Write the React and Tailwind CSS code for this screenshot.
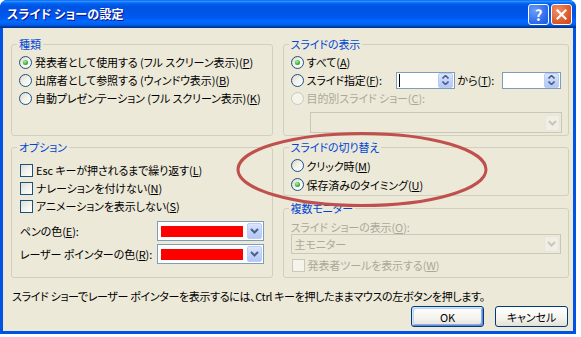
import React from 'react'
import { clsx } from 'clsx'
import { twMerge } from 'tailwind-merge'

function cn(...inputs) {
  return twMerge(clsx(inputs))
}

const U = ({ children }) => <span className="underline underline-offset-[1px]">{children}</span>

const Group = ({ title, className, children }) => (
  <div className={cn('relative rounded-[3px] border border-[#d0d0bf]', className)}>
    <span className="absolute left-[5px] top-[-8px] bg-[#ece9d8] px-[2px] leading-[14px] text-[#0046d5]">{title}</span>
    {children}
  </div>
)

const Radio = ({ checked, disabled, children, className }) => (
  <div className={cn('flex h-[18px] items-center', className)}>
    <div
      className={cn(
        'flex h-[13px] w-[13px] shrink-0 items-center justify-center rounded-full border',
        disabled
          ? 'border-[#cac8bb] bg-[#f5f4ea]'
          : 'border-[#1c5180] bg-[linear-gradient(135deg,#dcd9c8_0%,#f3f2ec_50%,#ffffff_100%)]'
      )}
    >
      {checked && (
        <div className="h-[5px] w-[5px] rounded-full bg-[radial-gradient(circle_at_40%_35%,#b6f29e_0%,#39b33b_55%,#1d8a1d_100%)]" />
      )}
    </div>
    <span className={cn('ml-[3px] whitespace-nowrap', disabled && 'text-[#aca899]')}>{children}</span>
  </div>
)

const Check = ({ disabled, children, className }) => (
  <div className={cn('flex h-[18px] items-center', className)}>
    <div
      className={cn(
        'h-[13px] w-[13px] shrink-0 border',
        disabled
          ? 'border-[#cac8bb] bg-[#f5f4ea]'
          : 'border-[#1c5180] bg-[linear-gradient(135deg,#dcdcd7_0%,#f0f0ea_45%,#ffffff_100%)]'
      )}
    />
    <span className={cn('ml-[3px] whitespace-nowrap', disabled && 'text-[#aca899]')}>{children}</span>
  </div>
)

const Chevron = ({ disabled }) => (
  <svg width="9" height="6" viewBox="0 0 9 6">
    <path d="M1 1 L4.5 4.5 L8 1" fill="none" stroke={disabled ? '#c9c7ba' : '#4d6185'} strokeWidth="2" />
  </svg>
)

const DropButton = ({ disabled }) => (
  <div
    className={cn(
      'flex h-[16px] w-[15px] items-center justify-center rounded-[2px] border',
      disabled
        ? 'border-[#e8e6da] bg-[#f1efe5]'
        : 'border-[#b9cdf7] bg-[linear-gradient(to_bottom,#dbe6fe_0%,#c3d4fb_50%,#b3c8f5_100%)]'
    )}
  >
    <Chevron disabled={disabled} />
  </div>
)

const Spinner = ({ caret, className }) => (
  <div className={cn('flex h-[17px] w-[59px] items-center justify-between border border-[#7f9db9] bg-white pr-[1px]', className)}>
    <div>{caret && <div className="ml-[2px] h-[13px] w-[1px] bg-black" />}</div>
    <div className="flex h-[15px] w-[15px] flex-col items-center justify-center gap-[2px] rounded-[2px] border border-[#b9cdf7] bg-[linear-gradient(to_bottom,#dbe6fe_0%,#c3d4fb_50%,#b3c8f5_100%)]">
      <svg width="7" height="4" viewBox="0 0 7 4">
        <path d="M0.5 3.5 L3.5 0.5 L6.5 3.5" fill="none" stroke="#4d6185" strokeWidth="1.6" />
      </svg>
      <svg width="7" height="4" viewBox="0 0 7 4">
        <path d="M0.5 0.5 L3.5 3.5 L6.5 0.5" fill="none" stroke="#4d6185" strokeWidth="1.6" />
      </svg>
    </div>
  </div>
)

const ColorCombo = ({ className }) => (
  <div className={cn('flex h-[20px] w-[107px] shrink-0 items-center justify-between border border-[#7f9db9] bg-white pl-[3px] pr-[1px]', className)}>
    <div className="h-[11px] w-[82px] bg-[#ff0000]" />
    <DropButton />
  </div>
)

const TitleButton = ({ children, className }) => (
  <div className={cn('flex h-[21px] w-[21px] items-center justify-center rounded-[3px] border border-white text-[15px] font-bold leading-none text-white', className)}>
    {children}
  </div>
)

export default function App() {
  return (
    <div className="relative h-[337px] w-[581px] bg-white font-['Noto_Sans_CJK_JP',sans-serif] text-[11px] leading-[14px] tracking-[-0.1px] text-black [font-feature-settings:'palt']">
      <div className="flex h-[334px] w-[576px] flex-col overflow-hidden rounded-t-[7px] bg-[#0054e3]">
        {/* Title bar */}
        <div className="flex h-[28px] shrink-0 items-center justify-between bg-[linear-gradient(to_bottom,#0058ee_0%,#3593ff_4%,#288eff_6%,#127dff_8%,#036ffc_10%,#0262ee_14%,#0057e5_20%,#0054e3_24%,#0055eb_56%,#005bf5_66%,#026afe_76%,#0062ef_86%,#0052d6_92%,#0040ab_94%,#003092_100%)] pl-[7px] pr-[4px]">
          <span className="text-[12px] font-bold tracking-[0.2px] text-white [text-shadow:1px_1px_#0f1089]">スライド ショーの設定</span>
          <div className="flex gap-[2px] pt-[1px]">
            <TitleButton className="bg-[radial-gradient(circle_at_30%_30%,#6d9cf8_0%,#2f6ef0_60%,#1d55d8_100%)]">?</TitleButton>
            <TitleButton className="bg-[radial-gradient(circle_at_30%_30%,#f0906a_0%,#e05a2c_60%,#c94418_100%)]">
              <svg width="11" height="11" viewBox="0 0 11 11">
                <path d="M1.5 1.5 L9.5 9.5 M9.5 1.5 L1.5 9.5" stroke="white" strokeWidth="2.2" strokeLinecap="square" />
              </svg>
            </TitleButton>
          </div>
        </div>

        {/* Client area */}
        <div className="mx-[3px] mb-[3px] flex flex-1 flex-col bg-[#ece9d8] pl-[8px] pr-[4px] pt-[16px]">
          <div className="flex gap-[10px]">
            {/* Left column */}
            <div className="flex w-[262px] flex-col">
              <Group title="種類" className="h-[92px] pl-[7px] pt-[8px]">
                <Radio checked>発表者として使用する (フル スクリーン表示)(<U>P</U>)</Radio>
                <Radio>出席者として参照する (ウィンドウ表示)(<U>B</U>)</Radio>
                <Radio>自動プレゼンテーション (フル スクリーン表示)(<U>K</U>)</Radio>
              </Group>
              <Group title="オプション" className="mt-[11px] h-[131px] pl-[8px] pt-[13px]">
                <Check>Esc キーが押されるまで繰り返す(<U>L</U>)</Check>
                <Check>ナレーションを付けない(<U>N</U>)</Check>
                <Check>アニメーションを表示しない(<U>S</U>)</Check>
                <div className="mt-[6px] flex items-center justify-between pr-[8px]">
                  <span className="whitespace-nowrap">ペンの色(<U>E</U>):</span>
                  <ColorCombo />
                </div>
                <div className="mt-[3px] flex items-center justify-between pr-[8px]">
                  <span className="whitespace-nowrap">レーザー ポインターの色(<U>R</U>):</span>
                  <ColorCombo />
                </div>
              </Group>
            </div>

            {/* Right column */}
            <div className="flex w-[287px] flex-col">
              <Group title="スライドの表示" className="h-[92px] pl-[7px] pt-[8px]">
                <Radio checked>すべて(<U>A</U>)</Radio>
                <div className="flex h-[18px] items-center">
                  <Radio className="w-[105px]">スライド指定(<U>F</U>):</Radio>
                  <Spinner caret />
                  <span className="w-[47px] whitespace-nowrap pl-[3px]">から(<U>T</U>):</span>
                  <Spinner />
                </div>
                <Radio disabled>目的別スライド ショー(<U>C</U>):</Radio>
                <div className="ml-[19px] mt-[5px] flex h-[21px] w-[252px] items-center justify-end border border-[#c9c7ba] bg-[#ece9d8] pr-[1px]">
                  <DropButton disabled />
                </div>
              </Group>
              <Group title="スライドの切り替え" className="mt-[11px] h-[49px] pl-[7px] pt-[8px]">
                <Radio className="h-[19px]">クリック時(<U>M</U>)</Radio>
                <Radio checked className="h-[19px]">保存済みのタイミング(<U>U</U>)</Radio>
              </Group>
              <Group title="複数モニター" className="mt-[12px] h-[70px] pl-[7px] pt-[11px]">
                <div className="h-[14px] text-[#aca899]">スライド ショーの表示(<U>O</U>):</div>
                <div className="flex h-[20px] w-[270px] items-center justify-between border border-[#c9c7ba] bg-[#ece9d8] pl-[3px] pr-[1px]">
                  <span className="text-[#aca899]">主モニター</span>
                  <DropButton disabled />
                </div>
                <Check disabled className="ml-[1px] mt-[2px]">発表者ツールを表示する(<U>W</U>)</Check>
              </Group>
            </div>
          </div>

          <div className="mt-[11px] h-[14px] whitespace-nowrap pl-[1px] tracking-[-0.35px]">
            スライド ショーでレーザー ポインターを表示するには、Ctrl キーを押したままマウスの左ボタンを押します。
          </div>

          <div className="mt-[3px] flex justify-end gap-[11px] pr-[1px]">
            <button className="flex h-[21px] w-[73px] items-center justify-center rounded-[3px] border border-[#003c74] bg-[linear-gradient(to_bottom,#ffffff_0%,#f4f3ee_60%,#e3e1d6_100%)] shadow-[inset_1px_1px_#cee7ff,inset_-1px_-1px_#6982ee,inset_2px_2px_#bcd4f6,inset_-2px_-2px_#89ade4]">
              OK
            </button>
            <button className="flex h-[21px] w-[73px] items-center justify-center rounded-[3px] border border-[#003c74] bg-[linear-gradient(to_bottom,#ffffff_0%,#f4f3ee_60%,#e3e1d6_100%)]">
              キャンセル
            </button>
          </div>
        </div>
      </div>

      {/* Red annotation ellipse */}
      <svg className="pointer-events-none absolute left-0 top-0" width="581" height="337">
        <ellipse cx="362" cy="169.5" rx="124" ry="36" fill="none" stroke="#c0504d" strokeWidth="3" />
      </svg>
    </div>
  )
}
